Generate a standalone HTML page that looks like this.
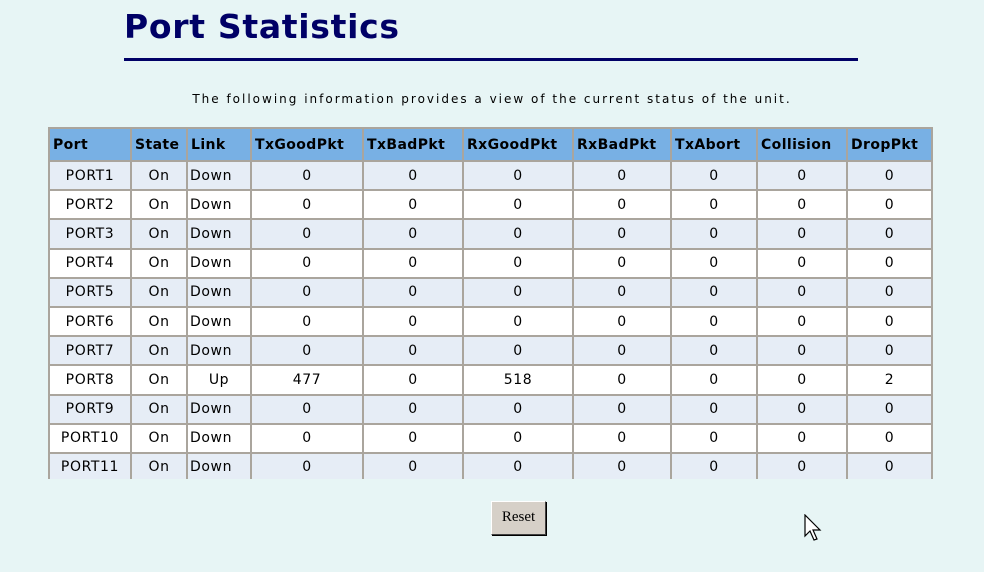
<!DOCTYPE html>
<html><head><style>
body{margin:0;width:984px;height:572px;background:#e7f5f5;position:relative;overflow:hidden;font-family:"DejaVu Sans",Verdana,sans-serif;}
h1{position:absolute;left:124px;top:7px;margin:0;font:bold 33px "DejaVu Sans",Verdana,sans-serif;letter-spacing:0.7px;color:#000066;}
.line{position:absolute;left:124px;top:58px;width:734px;height:3px;background:#000066;}
.info{position:absolute;left:0;width:984px;top:92px;text-align:center;font-size:12px;letter-spacing:2px;color:#000;}
.wrap{position:absolute;left:48px;top:127px;width:885px;height:352px;overflow:hidden;}
table{border-collapse:collapse;table-layout:fixed;width:883px;}
td,th{border:2px solid #aaa59d;padding:0;text-align:center;font-size:14px;letter-spacing:0.6px;height:27.2px;white-space:nowrap;overflow:hidden;}
th{background:#78b0e4;font-weight:bold;font-size:14px;letter-spacing:0.4px;text-align:left;padding-left:3px;height:31px;color:#000;}
tr.a td{background:#e6edf6;}
tr.b td{background:#fff;}
td.l{text-align:left;padding-left:2px;}
.btn{position:absolute;left:491px;top:501px;width:55px;height:34px;background:#d6d0c8;border:1px solid;border-color:#fff #404040 #404040 #fff;box-shadow:1px 1px 0 #000;font:15px "Liberation Serif",serif;text-align:center;line-height:30px;box-sizing:border-box;}
</style></head><body>
<h1>Port Statistics</h1>
<div class="line"></div>
<div class="info">The following information provides a view of the current status of the unit.</div>
<div class="wrap"><table>
<colgroup><col style="width:82px"><col style="width:56px"><col style="width:64px"><col style="width:112px"><col style="width:100px"><col style="width:110px"><col style="width:98px"><col style="width:86px"><col style="width:90px"><col style="width:85px"></colgroup>
<tr><th>Port</th><th>State</th><th>Link</th><th>TxGoodPkt</th><th>TxBadPkt</th><th>RxGoodPkt</th><th>RxBadPkt</th><th>TxAbort</th><th>Collision</th><th>DropPkt</th></tr>
<tr class="a"><td>PORT1</td><td>On</td><td class="l">Down</td><td>0</td><td>0</td><td>0</td><td>0</td><td>0</td><td>0</td><td>0</td></tr>
<tr class="b"><td>PORT2</td><td>On</td><td class="l">Down</td><td>0</td><td>0</td><td>0</td><td>0</td><td>0</td><td>0</td><td>0</td></tr>
<tr class="a"><td>PORT3</td><td>On</td><td class="l">Down</td><td>0</td><td>0</td><td>0</td><td>0</td><td>0</td><td>0</td><td>0</td></tr>
<tr class="b"><td>PORT4</td><td>On</td><td class="l">Down</td><td>0</td><td>0</td><td>0</td><td>0</td><td>0</td><td>0</td><td>0</td></tr>
<tr class="a"><td>PORT5</td><td>On</td><td class="l">Down</td><td>0</td><td>0</td><td>0</td><td>0</td><td>0</td><td>0</td><td>0</td></tr>
<tr class="b"><td>PORT6</td><td>On</td><td class="l">Down</td><td>0</td><td>0</td><td>0</td><td>0</td><td>0</td><td>0</td><td>0</td></tr>
<tr class="a"><td>PORT7</td><td>On</td><td class="l">Down</td><td>0</td><td>0</td><td>0</td><td>0</td><td>0</td><td>0</td><td>0</td></tr>
<tr class="b"><td>PORT8</td><td>On</td><td>Up</td><td>477</td><td>0</td><td>518</td><td>0</td><td>0</td><td>0</td><td>2</td></tr>
<tr class="a"><td>PORT9</td><td>On</td><td class="l">Down</td><td>0</td><td>0</td><td>0</td><td>0</td><td>0</td><td>0</td><td>0</td></tr>
<tr class="b"><td>PORT10</td><td>On</td><td class="l">Down</td><td>0</td><td>0</td><td>0</td><td>0</td><td>0</td><td>0</td><td>0</td></tr>
<tr class="a"><td>PORT11</td><td>On</td><td class="l">Down</td><td>0</td><td>0</td><td>0</td><td>0</td><td>0</td><td>0</td><td>0</td></tr>
</table></div>
<div class="btn">Reset</div>
<svg style="position:absolute;left:804px;top:514px" width="20" height="32" viewBox="0 0 20 32"><path d="M1 1 L1 22 L6 17 L10 26 L13 25 L9 16 L16 16 Z" fill="#fff" stroke="#000" stroke-width="1.2"/></svg>
</body></html>
